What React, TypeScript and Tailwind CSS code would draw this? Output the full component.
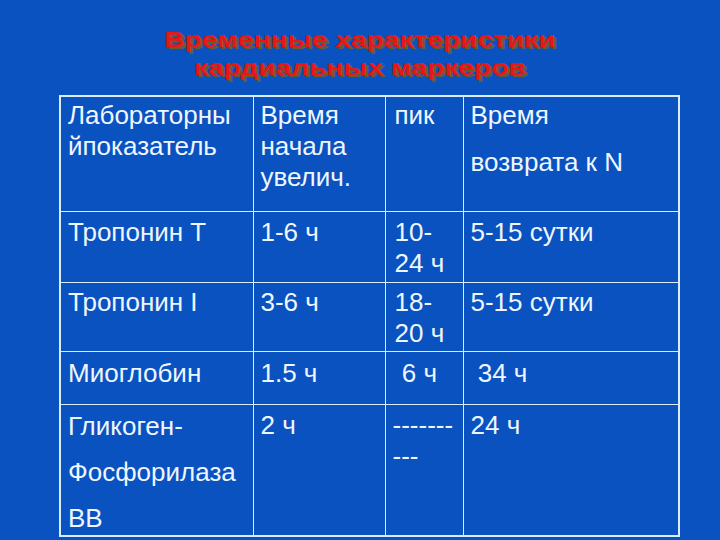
export default function App() {
  const cell =
    "border border-[#d8ecfa] align-top pl-[7px] pr-1 pt-[3px] leading-[31px]";
  return (
    <div
      className="w-[720px] h-[540px] overflow-hidden bg-[#0a52c0] text-[#eef6ff]"
      style={{ fontFamily: '"Liberation Sans", Arial, sans-serif' }}
    >
      <div className="h-[95px] pt-[26px] text-center">
        <h1 className="inline-block scale-x-[1.28] text-[22px] font-bold leading-[28px] text-[#e8161c] [text-shadow:2px_2px_0_#6b5a2a]">
          Временные характеристики
          <br />
          кардиальных маркеров
        </h1>
      </div>

      <table className="ml-[59px] border-collapse border-2 border-[#d8ecfa] text-[26px] table-fixed">
        <colgroup>
          <col className="w-[193px]" />
          <col className="w-[132px]" />
          <col className="w-[78px]" />
          <col className="w-[216px]" />
        </colgroup>
        <tbody>
          <tr className="h-[115px]">
            <td className={cell}>
              Лабораторны
              <br />
              йпоказатель
            </td>
            <td className={cell}>
              Время
              <br />
              начала
              <br />
              увелич.
            </td>
            <td className={cell + " pl-[9px]"}>пик</td>
            <td className={cell}>
              <div>Время</div>
              <div className="mt-[16px]">возврата к N</div>
            </td>
          </tr>
          <tr className="h-[71px]">
            <td className={cell + " pt-[5px]"}>Тропонин Т</td>
            <td className={cell + " pt-[5px]"}>1-6 ч</td>
            <td className={cell + " pt-[5px] pl-[9px] leading-[29px]"}>
              10-
              <br />
              24 ч
            </td>
            <td className={cell + " pt-[5px]"}>5-15 сутки</td>
          </tr>
          <tr className="h-[69px]">
            <td className={cell + " pt-[4px]"}>Тропонин I</td>
            <td className={cell + " pt-[4px]"}>3-6 ч</td>
            <td className={cell + " pt-[4px] pl-[9px] leading-[29px]"}>
              18-
              <br />
              20 ч
            </td>
            <td className={cell + " pt-[4px]"}>5-15 сутки</td>
          </tr>
          <tr className="h-[53px]">
            <td className={cell + " pt-[6px]"}>Миоглобин</td>
            <td className={cell + " pt-[6px]"}>1.5 ч</td>
            <td className={cell + " pt-[6px] pl-[9px] whitespace-pre"}> 6 ч</td>
            <td className={cell + " pt-[6px] whitespace-pre"}> 34 ч</td>
          </tr>
          <tr className="h-[132px]">
            <td className={cell + " pt-[5px]"}>
              <div className="-mt-[7px] -mb-[12px] leading-[46px]">
                Гликоген-
                <br />
                Фосфорилаза
                <br />
                ВВ
              </div>
            </td>
            <td className={cell + " pt-[5px]"}>2 ч</td>
            <td className={cell + " pt-[5px] pl-[6px]"}>
              <div>-------</div>
              <div>---</div>
            </td>
            <td className={cell + " pt-[5px] pl-[4px]"}>24 ч</td>
          </tr>
        </tbody>
      </table>
    </div>
  );
}
